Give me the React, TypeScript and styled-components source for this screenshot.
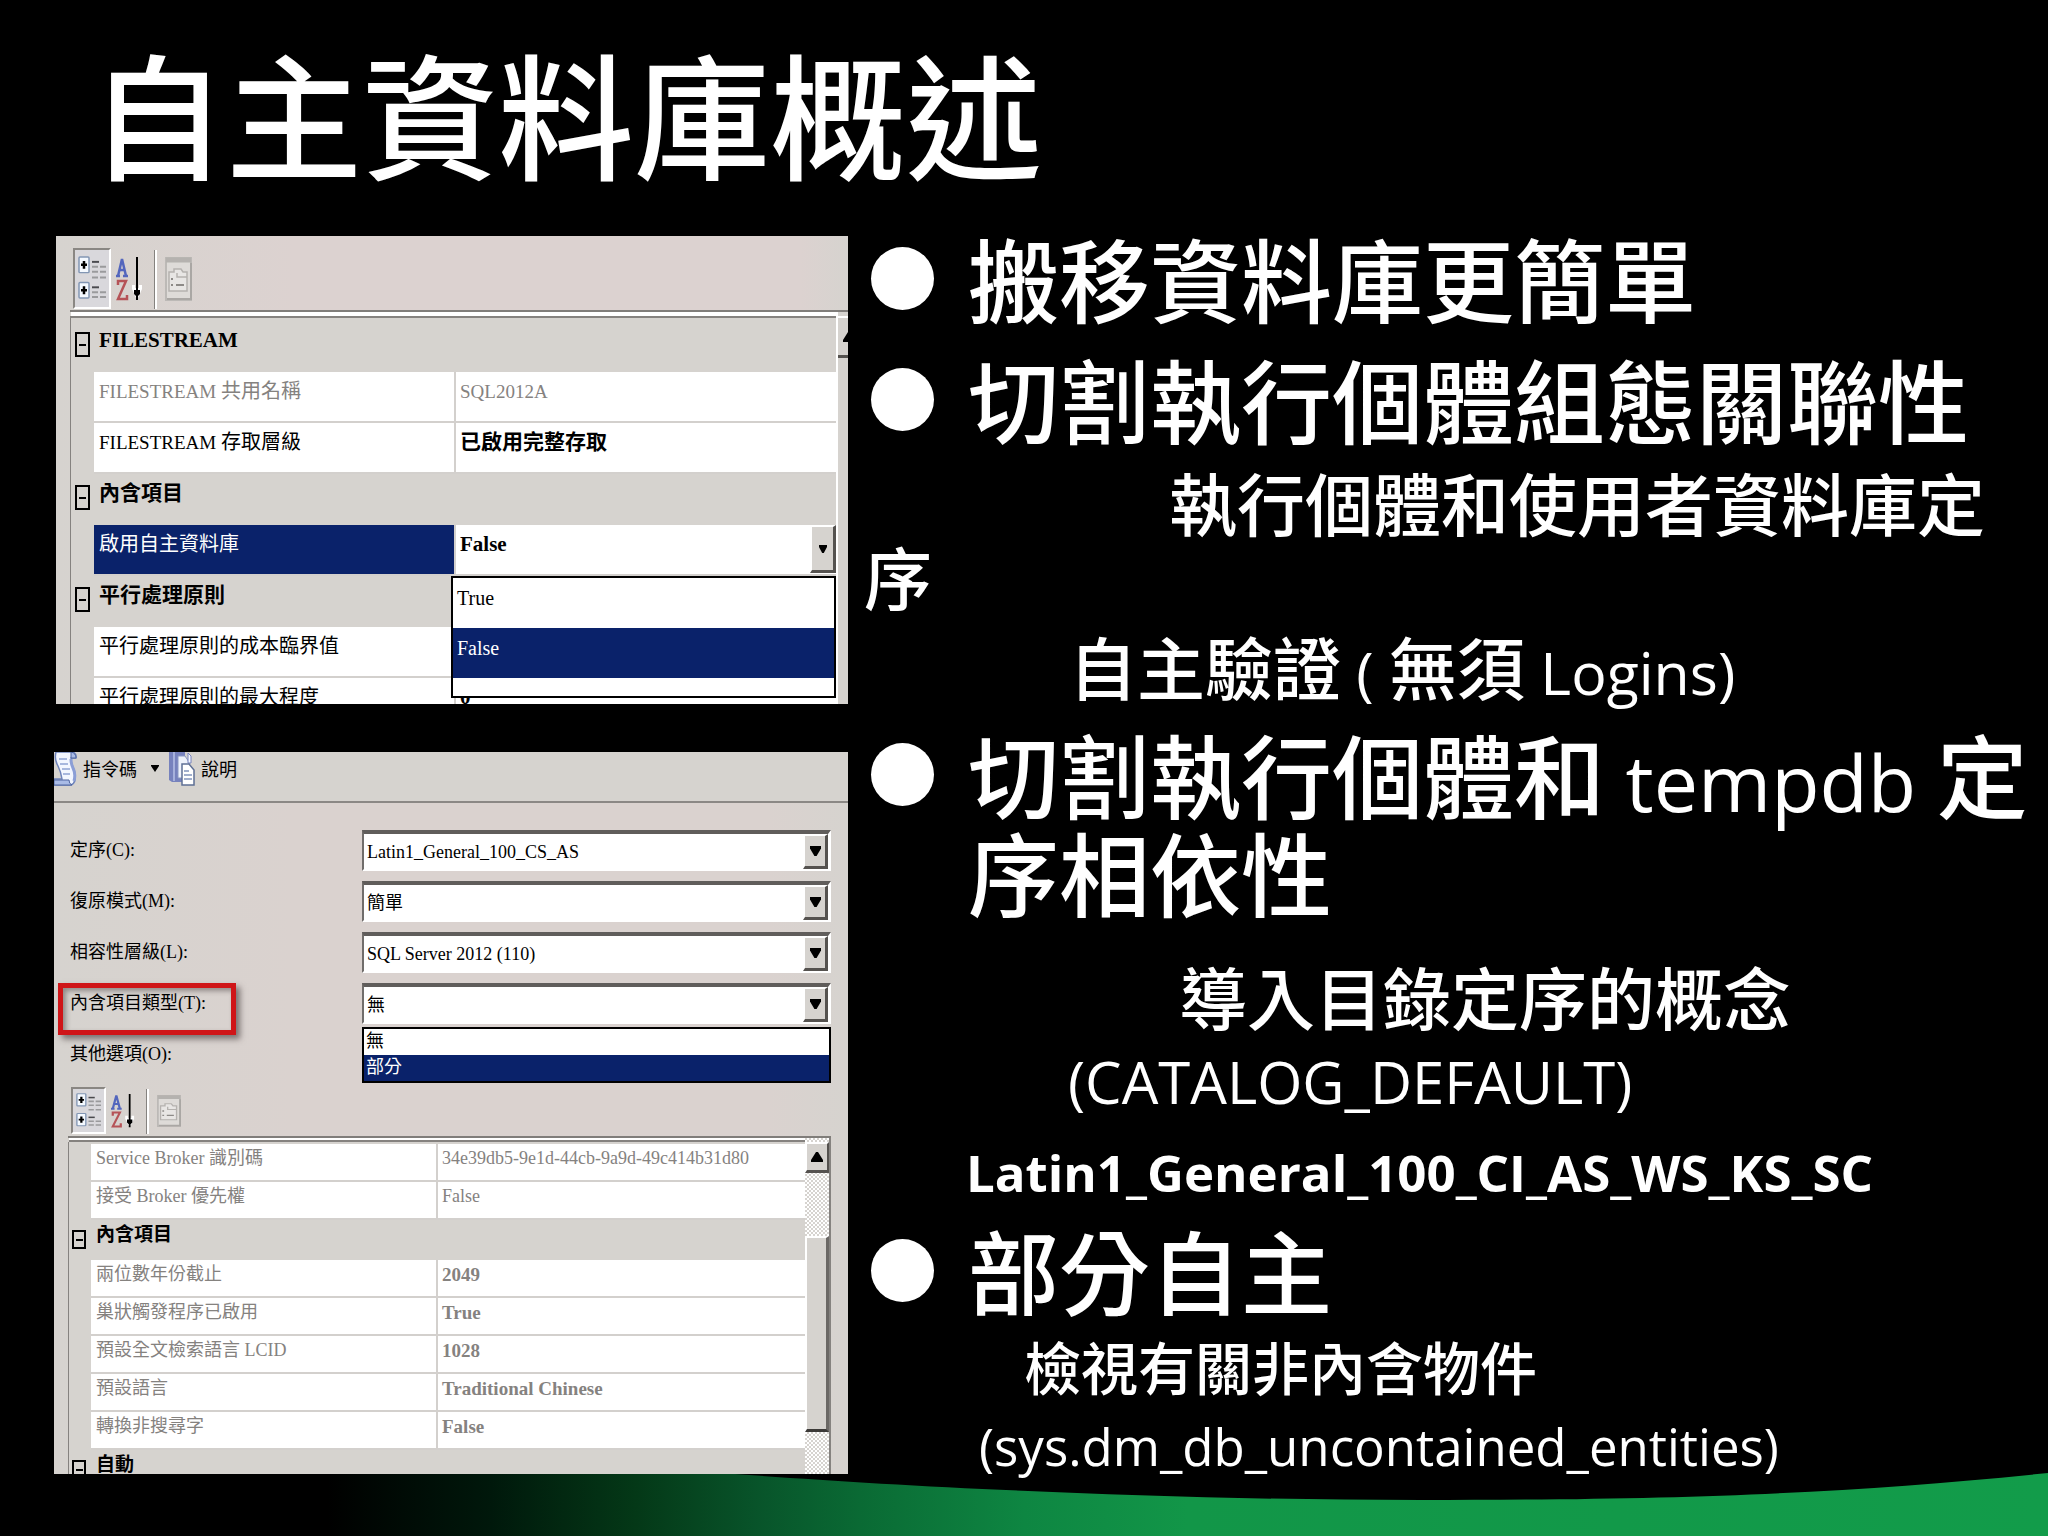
import React, { useId } from "react";
import styled, { createGlobalStyle, css } from "styled-components";

const cjk = `"Noto Sans CJK TC", sans-serif`;
const latin = `"Open Sans", "Noto Sans CJK TC", sans-serif`;
const dialog = `"Liberation Serif", "Noto Sans CJK TC", serif`;

const face = "#d6d3cf";
const navy = "#0a226a";

const Global = createGlobalStyle`
  * { box-sizing: border-box; }
  html, body { margin: 0; background: #000; }
  h1, h2, p, ul { margin: 0; padding: 0; font-weight: 400; }
  ul { list-style: none; }
  button, select { margin: 0; padding: 0; border: 0; border-radius: 0; appearance: none; background: none; color: inherit; font: inherit; }
`;

/* ---------- slide ---------- */

const Slide = styled.div`
  position: relative;
  min-height: 100vh;
  overflow: hidden;
  background: #000;
  color: #fff;
  font-family: ${cjk};
`;

const Title = styled.h1`
  padding: 40px 90px 0;
  font-size: 136px;
  font-weight: 500;
  line-height: 142px;
`;

const Columns = styled.main`
  display: grid;
  grid-template-columns: 53fr 75fr;
  align-items: start;
  padding-top: 45px;
`;

const Shots = styled.div`
  display: flex;
  flex-direction: column;
  gap: 48px;
  padding: 9px 0 0 54px;
  position: relative;
  z-index: 1;
`;

const Points = styled.div`
  padding-left: 16px;
  position: relative;
  z-index: 1;
`;

const Point = styled.h2<{ $top?: number }>`
  display: grid;
  grid-template-columns: 63px 1fr;
  column-gap: 34px;
  margin-top: ${(p) => p.$top ?? 0}px;
  padding-left: 7px;
  font-size: 91px;
  font-weight: 500;
  line-height: 98px;
`;

const Dot = styled.span`
  width: 63px;
  height: 63px;
  margin-top: 20px;
  border-radius: 50%;
  background: #fff;
`;

const Latin = styled.span<{ $size: number }>`
  font-family: ${latin};
  font-size: ${(p) => p.$size}px;
  font-weight: 400;
  line-height: 1;
`;

const Sub = styled.p<{ $top: number; $indent: number; $small?: boolean }>`
  margin-top: ${(p) => p.$top}px;
  text-indent: ${(p) => p.$indent}px;
  font-size: ${(p) => (p.$small ? 57 : 68)}px;
  font-weight: 500;
  line-height: ${(p) => (p.$small ? 60 : 74)}px;
`;

const Code = styled.p<{ $top: number; $indent: number; $size: number; $bold?: boolean }>`
  margin-top: ${(p) => p.$top}px;
  padding-left: ${(p) => p.$indent}px;
  font-family: ${latin};
  font-size: ${(p) => p.$size}px;
  font-weight: ${(p) => (p.$bold ? 700 : 400)};
  line-height: ${(p) => (p.$size > 52 ? 74 : 60)}px;
`;

const Swoosh = styled.svg`
  position: absolute;
  left: 0;
  bottom: 0;
  width: 100%;
  height: 64px;
`;

/* ---------- captured dialogs ---------- */

const Shot = styled.section<{ $tall?: boolean }>`
  position: relative;
  height: ${(p) => (p.$tall ? 722 : 468)}px;
  margin-left: ${(p) => (p.$tall ? 0 : 2)}px;
  padding-left: 14px;
  overflow: hidden;
  background: ${(p) =>
    p.$tall
      ? `linear-gradient(90deg, ${face} 0, #dad2cf 30%, #dad2cf 90%, ${face} 100%)`
      : `linear-gradient(90deg, ${face} 0, #dcd2d0 30%, #dcd2d0 94%, ${face} 100%)`};
  color: #000;
  font-family: ${dialog};
  font-size: ${(p) => (p.$tall ? 18 : 20)}px;
`;

const Tools = styled.div<{ $compact?: boolean }>`
  display: flex;
  align-items: center;
  height: ${(p) => (p.$compact ? 51 : 74)}px;
  padding: ${(p) => (p.$compact ? "2px 0 2px 3px" : "12px 0 1px 3px")};
`;

const ToolButton = styled.button<{ $pressed?: boolean; $compact?: boolean }>`
  display: flex;
  align-items: center;
  justify-content: center;
  align-self: stretch;
  ${(p) =>
    p.$pressed &&
    css`
      width: ${p.$compact ? 35 : 38}px;
      border: 2px solid;
      border-color: #8a8783 #fff #fff #8a8783;
      background: #d9d8dc;
    `}
`;

const Spacer = styled.span`
  width: 5px;
`;

const Rule = styled.span`
  align-self: stretch;
  width: 3px;
  margin: 2px 8px 0 11px;
  border-left: 1px solid #85827f;
  background: #fff;
`;

const GridFrame = styled.div<{ $inset?: boolean }>`
  display: flex;
  margin-right: ${(p) => (p.$inset ? 17 : 0)}px;
  border-top: 2px solid #807d7a;
  background: ${face};

  &::before {
    content: "";
    flex: none;
    width: 1px;
    margin-top: 4px;
    background: #85827f;
  }
`;

const Grid = styled.table<{ $dense?: boolean }>`
  flex: 1;
  height: max-content;
  border-top: ${(p) => (p.$dense ? 2 : 4)}px solid #fff;
  border-spacing: 0;
  table-layout: fixed;
  box-shadow: inset 0 2px 0 #85827f;
  line-height: ${(p) => (p.$dense ? 29 : 39)}px;
  background: ${face};

  th, td {
    height: ${(p) => (p.$dense ? 38 : 51)}px;
    padding: 0 0 0 5px;
    vertical-align: top;
    text-align: left;
    font-weight: 400;
    white-space: nowrap;
  }
`;

const Gap = styled.td<{ $h: number }>`
  && { height: ${(p) => p.$h}px; padding: 0; line-height: 0; }
`;

const Gutter = styled.td<{ $dense?: boolean }>`
  && { padding: ${(p) => (p.$dense ? "10px 0 0 3px" : "11px 0 0 4px")}; line-height: 0; }
`;

const Group = styled.th<{ $dense?: boolean }>`
  && {
    height: ${(p) => (p.$dense ? 40 : 51)}px;
    font-size: ${(p) => (p.$dense ? 19 : 21)}px;
    font-weight: 700;
  }
`;

const rowEdge = css`
  border-bottom: 2px solid #d3d0cd;
  background: #fff;
`;

const Name = styled.th<{ $dim?: boolean; $on?: boolean }>`
  ${rowEdge}
  color: ${(p) => (p.$on ? "#fff" : p.$dim ? "#85827f" : "#000")};
  ${(p) => p.$on && css`background: ${navy};`}
`;

const Value = styled.td<{ $dim?: boolean; $bold?: boolean }>`
  ${rowEdge}
  border-left: 2px solid #d3d0cd;
  color: ${(p) => (p.$dim ? "#85827f" : "#000")};
  && { padding-left: 4px; font-weight: ${(p) => (p.$bold ? 700 : 400)}; }
`;

const ValueText = styled.span<{ $size: number }>`
  font-size: ${(p) => p.$size}px;
`;

const En = styled.span`
  font-size: 19px;
`;

const Expander = styled.button<{ $dense?: boolean }>`
  display: flex;
  align-items: center;
  justify-content: center;
  width: ${(p) => (p.$dense ? 14 : 15)}px;
  height: ${(p) => (p.$dense ? 19 : 25)}px;
  border: 2px solid #000;

  &::after {
    content: "";
    width: 7px;
    height: 2px;
    background: #000;
  }
`;

const CellCombo = styled.div`
  display: flex;
  height: 48px;

  select { flex: 1; height: 39px; font-size: 21px; font-weight: 700; }
`;

const ArrowButton = styled.button<{ $wide?: boolean }>`
  display: flex;
  align-items: center;
  justify-content: center;
  width: ${(p) => (p.$wide ? 26 : 25)}px;
  border: solid;
  border-width: 2px 3px 3px 2px;
  border-color: #fff #55524f #55524f #fff;
  background: ${face};
`;

const Popup = styled.ul<{ $dense?: boolean }>`
  position: absolute;
  z-index: 2;
  border: 2px solid #000;
  background: #fff;
  ${(p) =>
    p.$dense
      ? css`left: 0; right: 0; top: 100%; margin-top: 3px;`
      : css`left: 395px; right: 12px; top: 340px; height: 122px;`}
`;

const Choice = styled.li<{ $dense?: boolean; $on?: boolean }>`
  height: ${(p) => (p.$dense ? 26 : 50)}px;
  padding-left: ${(p) => (p.$dense ? 2 : 4)}px;
  line-height: ${(p) => (p.$dense ? 25 : 41)}px;
  ${(p) => p.$on && css`background: ${navy}; color: #fff;`}
`;

const ScrollBar = styled.div<{ $wide?: boolean }>`
  display: flex;
  flex-direction: column;
  flex: none;
  padding-top: 4px;
  ${(p) =>
    p.$wide
      ? css`
          width: 26px;
          height: 340px;
          border-right: 2px solid #85827f;
          background: repeating-conic-gradient(#fff 0 25%, ${face} 0 50%) 0 0 / 4px 4px;
        `
      : css`
          width: 12px;
          border-left: 2px solid #fff;
          background: ${face};
        `}
`;

const ScrollUp = styled.button<{ $wide?: boolean }>`
  display: flex;
  align-items: center;
  justify-content: center;
  overflow: hidden;
  background: ${face};
  border-bottom: 3px solid #55524f;
  ${(p) =>
    p.$wide
      ? css`height: 31px; border-top: 2px solid #fff; border-left: 2px solid #fff; border-right: 2px solid #55524f;`
      : css`height: 42px; padding-left: 3px; border-top: 2px solid #fff; & > svg { flex: none; margin-right: -8px; }`}
`;

const Thumb = styled.span`
  height: 196px;
  margin-top: 63px;
  border: solid;
  border-width: 2px 3px 3px 2px;
  border-color: #fff #6b6865 #3c3a38 #fff;
  background: ${face};
`;

const MenuBar = styled.div`
  display: flex;
  align-items: center;
  height: 51px;
  margin-left: -14px;
  padding-bottom: 17px;
  border-bottom: 2px solid #8b8885;
  background: ${face};
`;

const MenuButton = styled.button`
  display: flex;
  align-items: center;
  gap: 6px;
`;

const MenuArrow = styled.svg`
  margin: 0 10px 0 14px;
`;

const Form = styled.form`
  display: grid;
  grid-template-columns: 292px 1fr;
  row-gap: 10px;
  padding: 27px 17px 10px 2px;
`;

const Label = styled.label`
  position: relative;
  align-self: center;
  line-height: 41px;
`;

const Mark = styled.span`
  position: absolute;
  top: 0;
  left: -12px;
  width: 178px;
  height: 52px;
  border: 5px solid #cf1518;
  box-shadow: 4px 4px 6px rgba(60, 50, 50, 0.6), inset 3px 3px 5px rgba(60, 50, 50, 0.45);
`;

const Combo = styled.div`
  position: relative;
  display: flex;
  height: 41px;
  border: solid;
  border-width: 4px 3px 2px 2px;
  border-color: #605d5b #fff #fff #706d6b;
  background: #fff;

  & > select { flex: 1; padding-left: 3px; }
`;

const Holder = styled.div`
  position: relative;
`;

/* ---------- drawings ---------- */

const Down = ({ w = 11, h = 10 }: { w?: number; h?: number }) => (
  <svg width={w} height={h} viewBox="0 0 10 8" preserveAspectRatio="none" aria-hidden="true">
    <path d="M0 0h10v2L6 8H4L0 2z" />
  </svg>
);

const Up = () => (
  <svg width="12" height="10" viewBox="0 0 12 10" aria-hidden="true">
    <path d="M0 10V8l5-8h2l5 8v2z" />
  </svg>
);

const CategoryIcon = ({ w, h }: { w: number; h: number }) => (
  <svg width={w} height={h} viewBox="0 0 28 46" preserveAspectRatio="none" aria-hidden="true">
    {[1, 27].map((y) => (
      <g key={y}>
        <rect x="1" y={y} width="10" height="16" rx="1" fill="#f4f9ff" stroke="#8296b4" strokeWidth="1.5" />
        <path d={`M3 ${y + 8}h6M6 ${y + 4}v8`} stroke="#000" strokeWidth="2.5" />
        <path d={`M14 ${y + 5}h7`} stroke="#4a4a4e" strokeWidth="2" />
        <path d={`M14 ${y + 10}h14M14 ${y + 15}h14`} stroke="#9a9a9c" strokeWidth="2" strokeDasharray="6 2" />
      </g>
    ))}
    <path d="M14 22h14" stroke="#9a9a9c" strokeWidth="2" strokeDasharray="6 2" />
  </svg>
);

const SortIcon = ({ w, h }: { w: number; h: number }) => (
  <svg width={w} height={h} viewBox="0 0 27 44" preserveAspectRatio="none" fill="none" aria-hidden="true">
    <path d="M2 19L6 2l4 17M3 13h6M0 19h4M7 19h5" stroke="#5366bd" strokeWidth="2.5" />
    <path d="M2 28v-4h8L2 42h9v-4" stroke="#b55357" strokeWidth="2.5" />
    <path d="M16 28h3v3h4v-3h3v4l-4 9h-2l-4-9z" fill="#fff" />
    <path d="M18 33h6v4l-2 2v4h-2v-4l-2-2z" fill="#000" />
    <path d="M21 0v36" stroke="#000" strokeWidth="2" />
  </svg>
);

const PageIcon = ({ w, h }: { w: number; h: number }) => (
  <svg width={w} height={h} viewBox="0 0 27 44" preserveAspectRatio="none" fill="none" aria-hidden="true">
    <rect x="1" y="1" width="25" height="42" fill="#dedbd8" stroke="#bcb9b6" strokeWidth="2" />
    <path d="M1 3h25" stroke="#b5b2af" strokeWidth="5" />
    <path d="M2 42h24V6" stroke="#aaa7a4" strokeWidth="2" />
    <path d="M4 15h5v-3h7l2 3h4v19H4z" fill="#e8e6e4" stroke="#b5b2af" strokeWidth="1.5" />
    <path d="M12 16v4h10" stroke="#b5b2af" strokeWidth="1.5" />
    <path d="M6 22h2M6 28h2M11 28h8" stroke="#8d8a87" strokeWidth="2" />
  </svg>
);

const ScriptIcon = () => (
  <svg width="23" height="35" viewBox="0 0 23 35" aria-hidden="true">
    <path d="M2 1h17q4 2 3 6h-5q0 5 2 9 3 7 2 13-1 4-4 5H0v-6h8q-1-7-4-13Q0 8 2 1z" fill="#f2f6ff" stroke="#6e83bb" strokeWidth="1.5" />
    <path d="M17 1q5 1 5 6h-5zM0 29h15q0 4 3 5H0z" fill="#a9bbe6" stroke="#4e649f" />
    <path d="M17 8q0 5 2 9 3 6 1 13" stroke="#8b9ed6" strokeWidth="3" fill="none" />
    <path d="M5 8h8M6 13h8M8 18h8M9 23h7" stroke="#8fa3d4" strokeWidth="1.5" />
  </svg>
);

const HelpIcon = () => (
  <svg width="26" height="35" viewBox="0 0 26 35" aria-hidden="true">
    <path d="M0 0h16v31H3l-3-2z" fill="#7782bd" />
    <path d="M4 0h2v30H4z" fill="#a7b1dc" />
    <path d="M9 5h7l4 6v16H9z" fill="#eef2fb" stroke="#8a97c2" />
    <path d="M19 2l3 3v7h-3z" fill="#f5f8ff" stroke="#7782bd" />
    <path d="M13 13h7l5 6v15H13z" fill="#fff" stroke="#5f7095" strokeWidth="1.5" />
    <path d="M15 20h5M15 24h8M15 28h8" stroke="#8295bd" strokeWidth="1.5" />
  </svg>
);

/* ---------- pieces ---------- */

const GridTools = ({ compact }: { compact?: boolean }) => (
  <Tools $compact={compact}>
    <ToolButton $pressed $compact={compact} aria-label="分類">
      <CategoryIcon w={compact ? 25 : 28} h={compact ? 35 : 45} />
    </ToolButton>
    <ToolButton aria-label="排序">
      <Spacer />
      <SortIcon w={compact ? 24 : 27} h={compact ? 34 : 44} />
    </ToolButton>
    <Rule />
    <ToolButton aria-label="屬性頁">
      <PageIcon w={compact ? 24 : 27} h={compact ? 32 : 44} />
    </ToolButton>
  </Tools>
);

type Row = { group?: string; en?: string; name?: string; value?: React.ReactNode; dim?: boolean; bold?: boolean; on?: boolean };

const PropertyRows = ({ rows, dense }: { rows: Row[]; dense?: boolean }) => (
  <>
    {rows.map((r) =>
      r.group ? (
        <tr key={r.group}>
          <Gutter $dense={dense}><Expander $dense={dense} aria-label={`摺疊 ${r.group}`} /></Gutter>
          <Group colSpan={2} $dense={dense}>{r.group}</Group>
        </tr>
      ) : (
        <tr key={(r.en ?? "") + r.name}>
          <Gutter $dense={dense} />
          <Name scope="row" $dim={r.dim} $on={r.on}>{r.en && <En>{r.en} </En>}{r.name}</Name>
          <Value $dim={r.dim} $bold={r.bold}>
            {typeof r.value === "string" ? <ValueText $size={r.bold ? (dense ? 19 : 21) : dense ? 18 : 19}>{r.value}</ValueText> : r.value}
          </Value>
        </tr>
      ),
    )}
  </>
);

const serverRows: Row[] = [
  { group: "FILESTREAM" },
  { en: "FILESTREAM", name: "共用名稱", value: "SQL2012A", dim: true },
  { en: "FILESTREAM", name: "存取層級", value: "已啟用完整存取", bold: true },
  { group: "內含項目" },
  {
    name: "啟用自主資料庫",
    on: true,
    value: (
      <CellCombo>
        <select aria-label="啟用自主資料庫" defaultValue="False"><option>True</option><option>False</option></select>
        <ArrowButton $wide aria-label="展開"><Down w={8} h={8} /></ArrowButton>
      </CellCombo>
    ),
  },
  { group: "平行處理原則" },
  { name: "平行處理原則的成本臨界值", value: "" },
  { name: "平行處理原則的最大程度", value: "0", bold: true },
];

const databaseRows: Row[] = [
  { name: "Service Broker 識別碼", value: "34e39db5-9e1d-44cb-9a9d-49c414b31d80", dim: true },
  { name: "接受 Broker 優先權", value: "False", dim: true },
  { group: "內含項目" },
  { name: "兩位數年份截止", value: "2049", dim: true, bold: true },
  { name: "巢狀觸發程序已啟用", value: "True", dim: true, bold: true },
  { name: "預設全文檢索語言 LCID", value: "1028", dim: true, bold: true },
  { name: "預設語言", value: "Traditional Chinese", dim: true, bold: true },
  { name: "轉換非搜尋字", value: "False", dim: true, bold: true },
  { group: "自動" },
];

const Field = ({ label, value, marked, children }: { label: string; value: string; marked?: boolean; children?: React.ReactNode }) => {
  const id = useId();
  return (
    <>
      <Label htmlFor={id}>{label}{marked && <Mark />}</Label>
      <Holder>
        <Combo>
          <select id={id} defaultValue={value}><option>{value}</option></select>
          <ArrowButton type="button" aria-label="展開"><Down /></ArrowButton>
        </Combo>
        {children}
      </Holder>
    </>
  );
};

export default function App() {
  return (
    <Slide>
      <Global />
      <Title>自主資料庫概述</Title>
      <Columns>
        <Shots>
          <Shot>
            <GridTools />
            <GridFrame>
              <Grid>
                <colgroup><col style={{ width: 23 }} /><col style={{ width: 360 }} /><col /></colgroup>
                <tbody>
                  <tr><Gap $h={5} /></tr>
                  <PropertyRows rows={serverRows} />
                </tbody>
              </Grid>
              <ScrollBar><ScrollUp aria-label="向上捲動"><Up /></ScrollUp></ScrollBar>
            </GridFrame>
            <Popup role="listbox" aria-label="啟用自主資料庫">
              <Choice role="option">True</Choice>
              <Choice role="option" aria-selected $on>False</Choice>
            </Popup>
          </Shot>

          <Shot $tall>
            <MenuBar>
              <MenuButton><ScriptIcon />指令碼</MenuButton>
              <MenuArrow width="8" height="7" viewBox="0 0 8 7"><path d="M0 0h8v1L4 7 0 1z" /></MenuArrow>
              <MenuButton><HelpIcon />說明</MenuButton>
            </MenuBar>
            <Form>
              <Field label="定序(C):" value="Latin1_General_100_CS_AS" />
              <Field label="復原模式(M):" value="簡單" />
              <Field label="相容性層級(L):" value="SQL Server 2012 (110)" />
              <Field label="內含項目類型(T):" value="無" marked>
                <Popup $dense role="listbox" aria-label="內含項目類型">
                  <Choice $dense role="option">無</Choice>
                  <Choice $dense $on role="option" aria-selected>部分</Choice>
                </Popup>
              </Field>
              <Label as="span">其他選項(O):</Label>
            </Form>
            <GridTools compact />
            <GridFrame $inset>
              <Grid $dense>
                <colgroup><col style={{ width: 22 }} /><col style={{ width: 345 }} /><col /></colgroup>
                <tbody>
                  <tr><Gap $h={4} /></tr>
                  <PropertyRows dense rows={databaseRows} />
                </tbody>
              </Grid>
              <ScrollBar $wide><ScrollUp $wide aria-label="向上捲動"><Up /></ScrollUp><Thumb /></ScrollBar>
            </GridFrame>
          </Shot>
        </Shots>

        <Points>
          <Point><Dot />搬移資料庫更簡單</Point>
          <Point $top={23}><Dot />切割執行個體組態關聯性</Point>
          <Sub $top={19} $indent={305}>執行個體和使用者資料庫定序</Sub>
          <Sub $top={16} $indent={205}>自主驗證 <Latin $size={59}>( </Latin>無須 <Latin $size={59}>Logins)</Latin></Sub>
          <Point $top={20}><Dot /><span>切割執行個體和 <Latin $size={79}>tempdb </Latin>定序相依性</span></Point>
          <Sub $top={40} $indent={315}>導入目錄定序的概念</Sub>
          <Code $top={12} $indent={204} $size={58}>(CATALOG_DEFAULT)</Code>
          <Code $top={23} $indent={102} $size={51} $bold>Latin1_General_100_CI_AS_WS_KS_SC</Code>
          <Point $top={17}><Dot />部分自主</Point>
          <Sub $top={18} $indent={160} $small>檢視有關非內含物件</Sub>
          <Code $top={21} $indent={115} $size={51}>(sys.dm_db_uncontained_entities)</Code>
        </Points>
      </Columns>
      <Swoosh viewBox="0 0 2048 64" preserveAspectRatio="none" aria-hidden="true">
        <defs>
          <linearGradient id="ground" x1="0" x2="2048" y1="0" y2="0" gradientUnits="userSpaceOnUse">
            <stop offset="0.16" stopColor="#000" />
            <stop offset="0.24" stopColor="#00180b" />
            <stop offset="0.31" stopColor="#043817" />
            <stop offset="0.37" stopColor="#08542a" />
            <stop offset="0.42" stopColor="#0a6a34" />
            <stop offset="0.5" stopColor="#0e8642" />
            <stop offset="0.58" stopColor="#129648" />
            <stop offset="1" stopColor="#129c4a" />
          </linearGradient>
        </defs>
        <path d="M0 2H735C900 14 1150 28 1420 28S1850 21 2048 1V64H0z" fill="url(#ground)" />
      </Swoosh>
    </Slide>
  );
}
